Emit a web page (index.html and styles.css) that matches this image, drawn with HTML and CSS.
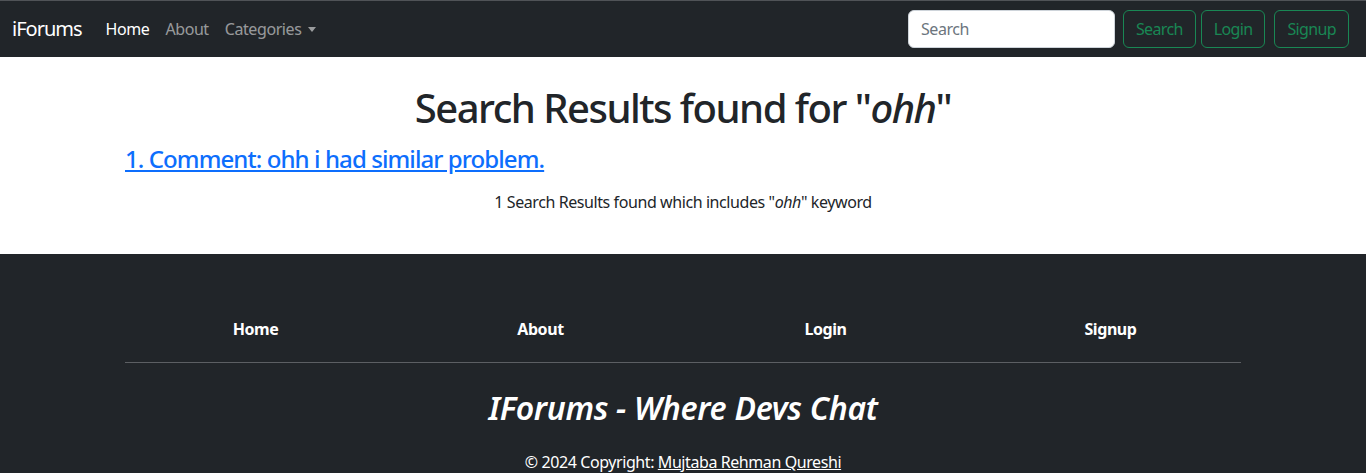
FILE: index.html
```html
<!DOCTYPE html>
<html lang="en">
<head>
<meta charset="utf-8">
<title>iForums - Search</title>
<link rel="stylesheet" href="styles.css">
</head>
<body>
<nav class="navbar">
  <div class="nav-inner">
    <a class="brand" href="#">iForums</a>
    <ul class="nav-links">
      <li><a class="nav-link active" href="#">Home</a></li>
      <li><a class="nav-link" href="#">About</a></li>
      <li><a class="nav-link dropdown" href="#">Categories <span class="caret"></span></a></li>
    </ul>
    <div class="nav-right">
      <form class="search-form">
        <input class="search-input" type="search" placeholder="Search">
        <button class="btn-outline" type="button">Search</button>
      </form>
      <button class="btn-outline login" type="button">Login</button>
      <button class="btn-outline signup" type="button">Signup</button>
    </div>
  </div>
</nav>

<main class="container results">
  <h1 class="title">Search Results found for "<em>ohh</em>"</h1>
  <h4 class="result"><a href="#">1. Comment: ohh i had similar problem.</a></h4>
  <p class="summary">1 Search Results found which includes "<em>ohh</em>" keyword</p>
</main>

<footer class="footer">
  <div class="container">
    <div class="footer-links">
      <a href="#">Home</a>
      <a href="#">About</a>
      <a href="#">Login</a>
      <a href="#">Signup</a>
    </div>
    <hr class="rule">
    <h2 class="tagline">IForums - Where Devs Chat</h2>
    <p class="copy">© 2024 Copyright: <a href="#">Mujtaba Rehman Qureshi</a></p>
  </div>
</footer>
</body>
</html>
```

FILE: styles.css
```css
* { box-sizing: border-box; }
html, body { margin: 0; padding: 0; }
body {
  font-family: "Noto Sans", "Open Sans", sans-serif;
  font-size: 16px;
  line-height: 1.5;
  letter-spacing: -0.026em;
  color: #212529;
  background: #fff;
  border-top: 1px solid #505357;
}
.navbar {
  background: #212529;
  height: 56px;
  display: flex;
  align-items: center;
}
.nav-inner {
  width: 100%;
  padding: 0 17px 0 12px;
  display: flex;
  align-items: center;
}
.brand {
  color: #fff;
  font-size: 20px;
  letter-spacing: -0.05em;
  text-decoration: none;
  margin-right: 16px;
}
.nav-links {
  list-style: none;
  margin: 0;
  padding: 0;
  display: flex;
}
.nav-link {
  display: block;
  padding: 8px;
  color: rgba(255,255,255,.55);
  text-decoration: none;
}
.nav-link.active { color: #fff; }
.caret {
  display: inline-block;
  width: 0; height: 0;
  margin-left: 3px;
  vertical-align: 3px;
  border-top: 5px solid rgba(255,255,255,.55);
  border-left: 4.5px solid transparent;
  border-right: 4.5px solid transparent;
}
.nav-right {
  margin-left: auto;
  display: flex;
  align-items: center;
}
.search-form { display: flex; align-items: center; }
.search-input {
  width: 207px;
  height: 38px;
  padding: 6px 12px;
  font: inherit;
  letter-spacing: inherit;
  color: #212529;
  border: 1px solid #ced4da;
  border-radius: 6px;
  background: #fff;
  margin-right: 8px;
}
.search-input::placeholder { color: #6c757d; }
.btn-outline {
  height: 38px;
  padding: 6px 12px;
  font: inherit;
  letter-spacing: -0.04em;
  color: #198754;
  background: transparent;
  border: 1px solid #198754;
  border-radius: 6px;
}
.login { margin-left: 5px; }
.signup { margin-left: 9px; }

.container {
  width: 1116px;
  margin: 0 auto;
}
.results { padding: 27px 0 40px; }
.title {
  margin: 0 0 13px;
  font-size: 40px;
  font-weight: 500;
  letter-spacing: -0.038em;
  line-height: 1.2;
  text-align: center;
}
.result {
  margin: 0 0 16px;
  font-size: 24px;
  font-weight: 500;
  letter-spacing: -0.038em;
  line-height: 1.2;
}
.result a { color: #0d6efd; }
.summary {
  margin: 0;
  text-align: center;
}

.footer {
  background: #212529;
  color: #fff;
  padding: 59px 0 0;
  height: 230px;
}
.footer-links {
  display: grid;
  grid-template-columns: repeat(4, 1fr);
  margin: 0 -12px;
  text-align: center;
}
.footer-links a {
  color: #fff;
  font-weight: 700;
  text-decoration: none;
  padding: 4px 0;
}
.rule {
  margin: 17px 0 26px;
  border: 0;
  border-top: 1px solid #5c5f63;
}
.tagline {
  margin: 0 0 23px;
  font-size: 32px;
  font-style: italic;
  font-weight: 600;
  letter-spacing: -0.01em;
  line-height: 1.2;
  text-align: center;
}
.copy {
  margin: 0;
  text-align: center;
}
.copy a { color: #fff; }
```
